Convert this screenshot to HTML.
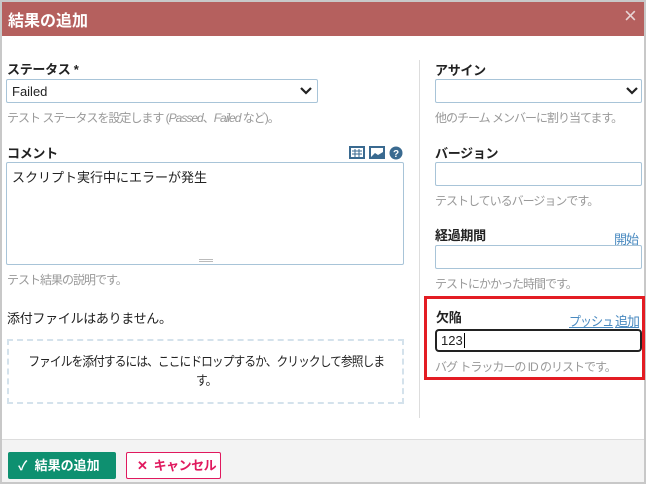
<!DOCTYPE html>
<html><head><meta charset="utf-8"><style>
*{box-sizing:border-box;margin:0;padding:0}
html,body{width:646px;height:484px}
body{background:#c8c8c8;font-family:"Liberation Sans","Noto Sans CJK JP",sans-serif;position:relative;overflow:hidden;color:#222}
.a{position:absolute;white-space:nowrap}
.lbl{font-size:13px;font-weight:bold;color:#222;letter-spacing:-0.3px}
.hint{font-size:12px;color:#999;letter-spacing:-1px}
.inp{border:1px solid #a8c4d8;background:#fff;border-radius:2px}
.lnk{font-size:13px;color:#4a8ac0;text-decoration:underline;letter-spacing:-1px}
</style></head><body>
<div class="a" style="left:2px;top:2px;width:642px;height:480px;background:#fff"></div>
<div class="a" style="left:2px;top:2px;width:642px;height:34px;background:#b5605e"></div>
<div class="a" style="left:8px;top:7px;font-size:16px;font-weight:bold;color:#fff">結果の追加</div>
<div class="a" style="left:624px;top:3px;font-size:22px;color:#e8d5d5">×</div>

<div class="a lbl" style="left:7px;top:59px">ステータス *</div>
<div class="a inp" style="left:6px;top:79px;width:312px;height:24px"></div>
<div class="a" style="left:12px;top:84px;font-size:13px">Failed</div>
<svg class="a" style="left:300px;top:87px" width="12" height="8"><path d="M1 1L6 6L11 1" stroke="#222" stroke-width="2.2" fill="none"/></svg>
<div class="a hint" style="left:7px;top:109px">テスト ステータスを設定します (<i>Passed</i>、<i>Failed</i> など)。</div>

<div class="a lbl" style="left:7px;top:143px">コメント</div>
<svg class="a" style="left:349px;top:146px" width="56" height="14">
<rect x="1" y="1" width="14" height="11" fill="#fff" stroke="#3a6a90" stroke-width="2"/><path d="M3 5H13M3 8H13M6 3V11M10 3V11" stroke="#3a6a90" stroke-width="1"/>
<rect x="21" y="1" width="14" height="11" fill="#fff" stroke="#3a6a90" stroke-width="2"/><path d="M22 11L26 7L29 9L34 6V11Z" fill="#3a6a90"/>
<circle cx="47" cy="7" r="6.5" fill="#3a6a90"/><text x="47" y="11" font-size="10" font-weight="bold" fill="#fff" text-anchor="middle" font-family="Liberation Sans">?</text>
</svg>
<div class="a inp" style="left:6px;top:162px;width:398px;height:103px"></div>
<div class="a" style="left:12px;top:167px;font-size:13px">スクリプト実行中にエラーが発生</div>
<div class="a" style="left:199px;top:259px;width:14px;height:3px;border-top:1px solid #bbb;border-bottom:1px solid #bbb"></div>
<div class="a hint" style="left:7px;top:271px">テスト結果の説明です。</div>
<div class="a" style="left:7px;top:308px;font-size:13px;letter-spacing:-0.3px">添付ファイルはありません。</div>
<div class="a" style="left:7px;top:339px;width:397px;height:65px;border:2px dashed #d4e2ec"></div>
<div class="a" style="left:7px;top:352px;width:397px;text-align:center;font-size:13px;line-height:19px;letter-spacing:-1px;transform:scaleX(0.9);transform-origin:206px 0">ファイルを添付するには、ここにドロップするか、クリックして参照しま<br>す。</div>

<div class="a" style="left:419px;top:60px;width:1px;height:358px;background:#ddd"></div>

<div class="a lbl" style="left:435px;top:60px">アサイン</div>
<div class="a inp" style="left:435px;top:79px;width:207px;height:24px"></div>
<svg class="a" style="left:626px;top:87px" width="12" height="8"><path d="M1 1L6 6L11 1" stroke="#222" stroke-width="2.2" fill="none"/></svg>
<div class="a hint" style="left:435px;top:109px">他のチーム メンバーに割り当てます。</div>
<div class="a lbl" style="left:435px;top:143px">バージョン</div>
<div class="a inp" style="left:435px;top:162px;width:207px;height:24px"></div>
<div class="a hint" style="left:435px;top:192px">テストしているバージョンです。</div>
<div class="a lbl" style="left:435px;top:225px">経過期間</div>
<div class="a lnk" style="left:614px;top:229px">開始</div>
<div class="a inp" style="left:435px;top:245px;width:207px;height:24px"></div>
<div class="a hint" style="left:435px;top:275px">テストにかかった時間です。</div>

<div class="a" style="left:424px;top:296px;width:221px;height:84px;border:3px solid #e31c23"></div>
<div class="a lbl" style="left:436px;top:307px">欠陥</div>
<div class="a lnk" style="left:569px;top:311px;transform:scaleX(0.92);transform-origin:0 0">プッシュ</div>
<div class="a lnk" style="left:615px;top:311px">追加</div>
<div class="a" style="left:435px;top:329px;width:207px;height:23px;border:2px solid #222;border-radius:4px;background:#fff"></div>
<div class="a" style="left:441px;top:333px;font-size:13px">123<span style="border-left:1px solid #000;margin-left:1px"></span></div>
<div class="a hint" style="left:435px;top:358px">バグ トラッカーの ID のリストです。</div>

<div class="a" style="left:2px;top:439px;width:642px;height:43px;background:#f3f3f3;border-top:1px solid #ddd"></div>
<div class="a" style="left:8px;top:452px;width:108px;height:27px;background:#0e9070;border-radius:2px;color:#fff;font-size:13px;font-weight:bold;line-height:27px;padding-left:10px">✓&nbsp; 結果の追加</div>
<div class="a" style="left:126px;top:452px;width:95px;height:27px;border:1px solid #e0195e;background:#fff;border-radius:2px;color:#e0195e;font-size:13px;font-weight:bold;line-height:25px;padding-left:10px;letter-spacing:-0.5px">✕&nbsp; キャンセル</div>
</body></html>
